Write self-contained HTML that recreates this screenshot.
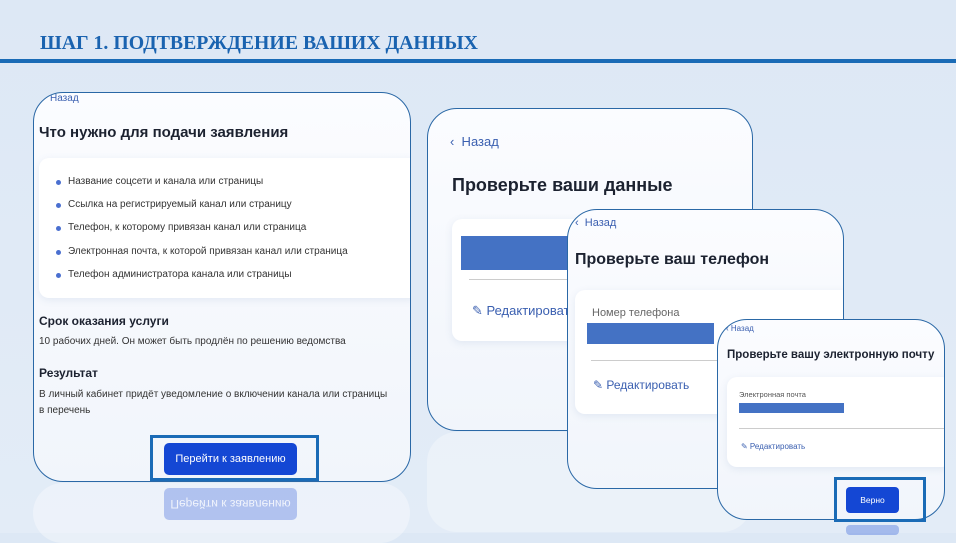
<!DOCTYPE html><html><head><meta charset="utf-8"><style>
*{margin:0;padding:0;box-sizing:border-box}
body{width:956px;height:533px;overflow:hidden;background:linear-gradient(#dde8f5,#e3ecf7);font-family:"Liberation Sans","DejaVu Sans",sans-serif;position:relative;color:#1c2230}
.a{position:absolute}
.card{position:absolute;background:linear-gradient(#fbfcff,#f1f5fb);border:1.3px solid #2a68a6;border-radius:30px;overflow:hidden}
.in{position:absolute;background:#fff;border-radius:10px;box-shadow:0 2px 8px rgba(90,120,170,.12)}
.blue{position:absolute;background:#4472c4}
.lnk{color:#3a5fb0}
ul{list-style:none}
li{height:23.2px;position:relative;padding-left:29px}
li:before{content:"";position:absolute;left:17px;top:4px;width:5px;height:5px;border-radius:50%;background:#4a6fd0}
</style></head><body>
<div class="a" style="left:40px;top:32px;font-family:'Liberation Serif',serif;font-weight:bold;font-size:19.8px;color:#1a63b0">ШАГ 1. ПОДТВЕРЖДЕНИЕ ВАШИХ ДАННЫХ</div>
<div class="a" style="left:0;top:59px;width:956px;height:4px;background:#1a6bb6"></div>

<div class="a" style="left:33px;top:483px;width:377px;height:60px;border-radius:30px;background:rgba(255,255,255,.35)"></div>
<div class="a" style="left:164px;top:488px;width:133px;height:32px;border-radius:5px;background:rgba(20,71,212,.28);color:rgba(255,255,255,.8);font-size:12px;text-align:center;line-height:32px;transform:scaleY(-1)">Перейти к заявлению</div>
<div class="a" style="left:427px;top:432px;width:325px;height:100px;border-radius:30px;background:rgba(255,255,255,.3)"></div>
<div class="a" style="left:846px;top:525px;width:53px;height:10px;border-radius:4px;background:rgba(20,71,212,.3)"></div>

<div class="card" style="left:33px;top:92px;width:378px;height:390px">
 <div class="a lnk" style="left:16px;top:0px;font-size:10px">Назад</div>
 <div class="a" style="left:5px;top:31px;font-size:15px;font-weight:bold;color:#1c2230">Что нужно для подачи заявления</div>
 <div class="in" style="left:5px;top:65px;width:380px;height:140px;font-size:10px;color:#333">
  <ul class="a" style="left:0;top:18px;width:370px">
   <li>Название соцсети и канала или страницы</li>
   <li>Ссылка на регистрируемый канал или страницу</li>
   <li>Телефон, к которому привязан канал или страница</li>
   <li>Электронная почта, к которой привязан канал или страница</li>
   <li>Телефон администратора канала или страницы</li>
  </ul>
 </div>
 <div class="a" style="left:5px;top:221px;font-size:12px;font-weight:bold">Срок оказания услуги</div>
 <div class="a" style="left:5px;top:243px;font-size:10px;color:#333">10 рабочих дней. Он может быть продлён по решению ведомства</div>
 <div class="a" style="left:5px;top:273px;font-size:12px;font-weight:bold">Результат</div>
 <div class="a" style="left:5px;top:294px;font-size:10px;color:#333;line-height:16px">В личный кабинет придёт уведомление о включении канала или страницы<br>в перечень</div>
</div>
<div class="a" style="left:150px;top:435px;width:169px;height:46px;border:3px solid #1a6bb6"></div>
<div class="a" style="left:164px;top:443px;width:133px;height:32px;border-radius:5px;background:#1447d4;color:#fff;font-size:11px;text-align:center;line-height:32px">Перейти к заявлению</div>

<div class="card" style="left:427px;top:108px;width:326px;height:323px">
 <div class="a lnk" style="left:22px;top:25px;font-size:13px">‹&nbsp; Назад</div>
 <div class="a" style="left:24px;top:66px;font-size:18px;font-weight:bold">Проверьте ваши данные</div>
 <div class="in" style="left:24px;top:110px;width:300px;height:122px">
  <div class="blue" style="left:9px;top:17px;width:130px;height:34px"></div>
  <div class="a" style="left:17px;top:60px;width:260px;height:1px;background:#ccc"></div>
  <div class="a lnk" style="left:20px;top:84px;font-size:13px">✎ Редактировать</div>
 </div>
</div>

<div class="card" style="left:567px;top:209px;width:277px;height:280px">
 <div class="a lnk" style="left:7px;top:7px;font-size:11px">‹&nbsp; Назад</div>
 <div class="a" style="left:7px;top:41px;font-size:16px;font-weight:bold">Проверьте ваш телефон</div>
 <div class="in" style="left:7px;top:80px;width:280px;height:124px">
  <div class="a" style="left:17px;top:17px;font-size:11px;color:#666">Номер телефона</div>
  <div class="blue" style="left:12px;top:33px;width:127px;height:21px"></div>
  <div class="a" style="left:16px;top:70px;width:260px;height:1px;background:#ccc"></div>
  <div class="a lnk" style="left:18px;top:88px;font-size:12px">✎ Редактировать</div>
 </div>
</div>

<div class="card" style="left:717px;top:319px;width:228px;height:201px">
 <div class="a lnk" style="left:8px;top:4px;font-size:8px">‹ Назад</div>
 <div class="a" style="left:9px;top:29px;font-size:11.5px;font-weight:bold">Проверьте вашу электронную почту</div>
 <div class="in" style="left:9px;top:57px;width:225px;height:90px">
  <div class="a" style="left:12px;top:13px;font-size:7.5px;color:#555">Электронная почта</div>
  <div class="blue" style="left:12px;top:26px;width:105px;height:10px"></div>
  <div class="a" style="left:12px;top:51px;width:210px;height:1px;background:#ccc"></div>
  <div class="a lnk" style="left:14px;top:65px;font-size:8px">✎ Редактировать</div>
 </div>
</div>
<div class="a" style="left:834px;top:477px;width:92px;height:45px;border:3px solid #1a6bb6"></div>
<div class="a" style="left:846px;top:487px;width:53px;height:26px;border-radius:4px;background:#1447d4;color:#fff;font-size:8.5px;text-align:center;line-height:26px">Верно</div>
</body></html>
